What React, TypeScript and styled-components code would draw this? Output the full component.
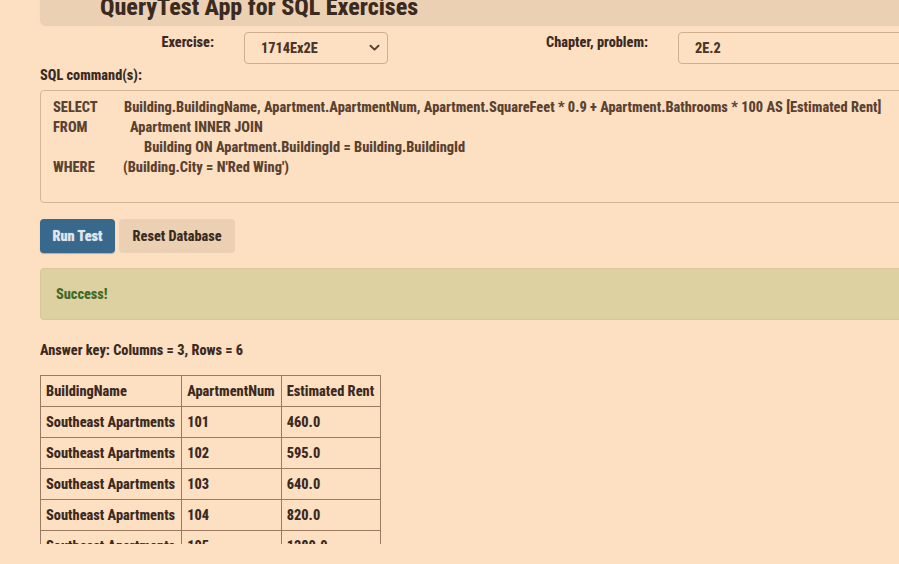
import React from "react";
import styled, { createGlobalStyle } from "styled-components";

const Global = createGlobalStyle`
  html, body { margin: 0; padding: 0; overflow: hidden; background: #fddfc2; }
  body {
    font-family: Roboto, "Liberation Sans", Arial, sans-serif;
    font-stretch: 75%;
    font-weight: 800;
    color: #3b2a1f;
  }
  * { box-sizing: border-box; }
`;

const Viewport = styled.div`
  width: 899px;
  height: 544px;
  overflow: hidden;
  background: #fddfc2;
`;

const Page = styled.div`
  width: 1120px;
  margin-left: 40px;
  margin-top: -14px;
`;

const Header = styled.div`
  background: #ecd0b3;
  border-radius: 0 0 0 6px;
  padding: 8px 0 5px 60px;
  box-shadow: 0 1px 1px rgba(150, 110, 80, 0.15);
`;

const Title = styled.h1`
  margin: 0;
  font-size: 24px;
  line-height: 26px;
  color: #3b2a1f;
  font-weight: 800;
  font-stretch: 75%;
`;

const FormRow = styled.div`
  display: grid;
  grid-template-columns: 174px 144px 230px 320px;
  column-gap: 30px;
  margin-top: 7px;
`;

const Label = styled.label`
  text-align: right;
  font-size: 14.3px;
  line-height: 16px;
  padding-top: 2px;
  color: #3b2a1f;
`;

const SelectBox = styled.div`
  height: 32px;
  border: 1px solid #cfae8e;
  border-radius: 4px;
  display: flex;
  align-items: center;
  justify-content: space-between;
  padding: 0 7px 0 16px;
  font-size: 14.3px;
  color: #4a3526;
`;

const InputBox = styled(SelectBox)`
  justify-content: flex-start;
  padding-left: 16px;
`;

const SectionLabel = styled.div`
  font-size: 14.3px;
  line-height: 16px;
  margin-top: 3px;
  color: #3b2a1f;
`;

const Code = styled.div`
  margin-top: 7px;
  height: 113px;
  border: 1px solid #d4b597;
  border-radius: 4px;
  padding: 7px 0 0 12px;
  font-size: 14.4px;
  line-height: 20px;
  color: #5a4231;
  white-space: nowrap;
`;

const CodeLine = styled.div`
  display: flex;
  height: 20px;
`;

const Keyword = styled.span`
  width: 71px;
  flex: none;
`;

const Clause = styled.span<{ $indent: number }>`
  margin-left: ${(p) => p.$indent}px;
`;

const Buttons = styled.div`
  display: flex;
  gap: 4px;
  margin-top: 16px;
`;

const Button = styled.button<{ $primary?: boolean }>`
  font-family: inherit;
  font-stretch: 75%;
  font-weight: 800;
  font-size: 14.3px;
  height: 34px;
  border: none;
  border-radius: 4px;
  padding: 0 ${(p) => (p.$primary ? 12.5 : 13.5)}px;
  background: ${(p) => (p.$primary ? "#38698c" : "#ecd0b3")};
  color: ${(p) => (p.$primary ? "#dfe6ec" : "#3b2a1f")};
  text-shadow: ${(p) => (p.$primary ? "0 0 1px rgba(255,255,255,0.6)" : "none")};
  box-shadow: ${(p) => (p.$primary ? "0 1px 1px rgba(30,50,70,0.3)" : "none")};
`;

const Alert = styled.div`
  margin-top: 15px;
  height: 52px;
  background: #ddd1a2;
  border: 1px solid #d5c796;
  border-radius: 4px;
  padding: 0 15px;
  display: flex;
  align-items: center;
  font-size: 14.3px;
  color: #3f6a27;
`;

const AnswerKey = styled.div`
  margin-top: 22px;
  font-size: 14.3px;
  line-height: 16px;
  color: #3b2a1f;
`;

const Table = styled.table`
  margin-top: 17px;
  border-collapse: collapse;
  font-size: 14.4px;
  color: #3b2a1f;
`;

const Th = styled.th`
  border: 1px solid #9b7a5f;
  text-align: left;
  padding: 0 6px 0 5px;
  height: 31px;
  font-weight: 800;
`;

const Td = styled.td`
  border: 1px solid #9b7a5f;
  padding: 0 6px 0 5px;
  height: 31px;
`;

const Chevron = () => (
  <svg width="11" height="8" viewBox="0 0 11 8" fill="none">
    <path d="M1.5 1.8 L5.5 5.6 L9.5 1.8" stroke="#5a4231" strokeWidth="2" strokeLinecap="round" strokeLinejoin="round" />
  </svg>
);

const rows = [
  ["Southeast Apartments", "101", "460.0"],
  ["Southeast Apartments", "102", "595.0"],
  ["Southeast Apartments", "103", "640.0"],
  ["Southeast Apartments", "104", "820.0"],
  ["Southeast Apartments", "105", "1280.0"],
  ["Southeast Apartments", "106", "1040.0"],
];

export default function App() {
  return (
    <Viewport>
      <Global />
      <Page>
        <Header>
          <Title>QueryTest App for SQL Exercises</Title>
        </Header>
        <FormRow>
          <Label>Exercise:</Label>
          <SelectBox>
            <span>1714Ex2E</span>
            <Chevron />
          </SelectBox>
          <Label>Chapter, problem:</Label>
          <InputBox>2E.2</InputBox>
        </FormRow>
        <SectionLabel>SQL command(s):</SectionLabel>
        <Code>
          <CodeLine>
            <Keyword>SELECT</Keyword>
            <Clause $indent={0}>
              Building.BuildingName, Apartment.ApartmentNum, Apartment.SquareFeet * 0.9 + Apartment.Bathrooms * 100 AS [Estimated Rent]
            </Clause>
          </CodeLine>
          <CodeLine>
            <Keyword>FROM</Keyword>
            <Clause $indent={6}>Apartment INNER JOIN</Clause>
          </CodeLine>
          <CodeLine>
            <Keyword />
            <Clause $indent={20}>Building ON Apartment.BuildingId = Building.BuildingId</Clause>
          </CodeLine>
          <CodeLine>
            <Keyword>WHERE</Keyword>
            <Clause $indent={-1}>(Building.City = N'Red Wing')</Clause>
          </CodeLine>
        </Code>
        <Buttons>
          <Button $primary>Run Test</Button>
          <Button>Reset Database</Button>
        </Buttons>
        <Alert>Success!</Alert>
        <AnswerKey>Answer key: Columns = 3, Rows = 6</AnswerKey>
        <Table>
          <thead>
            <tr>
              <Th>BuildingName</Th>
              <Th>ApartmentNum</Th>
              <Th>Estimated Rent</Th>
            </tr>
          </thead>
          <tbody>
            {rows.map((r, i) => (
              <tr key={i}>
                {r.map((c, j) => (
                  <Td key={j}>{c}</Td>
                ))}
              </tr>
            ))}
          </tbody>
        </Table>
      </Page>
    </Viewport>
  );
}
